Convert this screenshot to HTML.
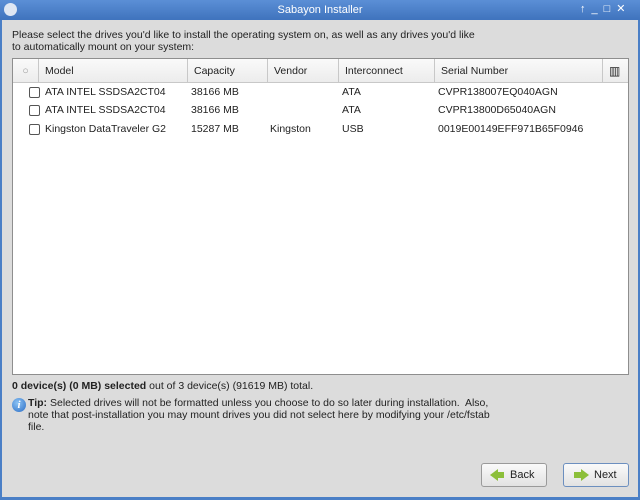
<html><head><style>
body{margin:0;width:640px;height:500px;background:#4a7fc6;font-family:"Liberation Sans",sans-serif;font-size:10.5px;color:#222;position:relative;overflow:hidden}
.title{position:absolute;left:0;top:0;width:640px;height:20px;background:linear-gradient(#5b8fd6,#3f73bd);color:#fff;text-align:center;line-height:20px;font-size:11px}
.win{position:absolute;left:2px;top:20px;width:636px;height:477px;background:#dcdcdc}
.abs{position:absolute;white-space:nowrap}
.tbl{position:absolute;left:12px;top:58px;width:615px;height:315px;background:#fff;border:1px solid #8e8e8e}
.hdr{position:absolute;left:0;top:0;width:615px;height:23px;background:linear-gradient(#fafafa,#ececec);border-bottom:1px solid #c8c8c8}
.hc{position:absolute;top:0;height:23px;line-height:25px;border-right:1px solid #c8c8c8;padding-left:6px;box-sizing:border-box}
.row{position:absolute;left:0;height:18px;line-height:18px;width:615px}
.row span{position:absolute}
.cb{position:absolute;left:16px;top:4px;width:9px;height:9px;border:1px solid #555;border-radius:2px;background:#fff}
.btn{position:absolute;top:463px;width:64px;height:22px;border:1px solid #9a9a9a;border-radius:3px;background:linear-gradient(#fafafa,#e2e2e2);line-height:22px;font-size:11px}
</style></head><body>
<div class="title">Sabayon Installer</div>
<div class="abs" style="left:4px;top:3px;width:13px;height:13px;border-radius:50%;background:#dfe7f3"></div>
<div class="abs" style="left:580px;top:2px;color:#fff;font-size:11px;letter-spacing:6px">↑_□✕</div>
<div class="win"></div>
<div class="abs" style="left:12px;top:29px;line-height:12px">Please select the drives you'd like to install the operating system on, as well as any drives you'd like<br>to automatically mount on your system:</div>
<div class="tbl">
<div class="hdr">
<div class="hc" style="left:0;width:26px;color:#999;text-align:center;padding:0">○</div>
<div class="hc" style="left:26px;width:149px">Model</div>
<div class="hc" style="left:175px;width:80px">Capacity</div>
<div class="hc" style="left:255px;width:71px">Vendor</div>
<div class="hc" style="left:326px;width:96px">Interconnect</div>
<div class="hc" style="left:422px;width:168px">Serial Number</div>
<div class="hc" style="left:590px;width:25px;border:none;font-size:12px">▥</div>
</div>
<div class="row" style="top:24px"><div class="cb"></div><span style="left:32px">ATA INTEL SSDSA2CT04</span><span style="left:178px">38166 MB</span><span style="left:329px">ATA</span><span style="left:425px">CVPR138007EQ040AGN</span></div>
<div class="row" style="top:42px"><div class="cb"></div><span style="left:32px">ATA INTEL SSDSA2CT04</span><span style="left:178px">38166 MB</span><span style="left:329px">ATA</span><span style="left:425px">CVPR13800D65040AGN</span></div>
<div class="row" style="top:61px"><div class="cb"></div><span style="left:32px">Kingston DataTraveler G2</span><span style="left:178px">15287 MB</span><span style="left:257px">Kingston</span><span style="left:329px">USB</span><span style="left:425px">0019E00149EFF971B65F0946</span></div>
</div>
<div class="abs" style="left:12px;top:380px"><b>0 device(s) (0 MB) selected</b> out of 3 device(s) (91619 MB) total.</div>
<div class="abs" style="left:12px;top:398px;width:14px;height:14px;border-radius:50%;background:radial-gradient(circle at 40% 35%,#8cc4f5,#2a6cc4);color:#fff;font:italic bold 11px 'Liberation Serif',serif;text-align:center;line-height:14px">i</div>
<div class="abs" style="left:28px;top:397px;line-height:12px"><b>Tip:</b> Selected drives will not be formatted unless you choose to do so later during installation.&nbsp; Also,<br>note that post-installation you may mount drives you did not select here by modifying your /etc/fstab<br>file.</div>
<div class="btn" style="left:481px"><span style="position:absolute;left:8px;top:5px;width:0;height:0;border-top:6px solid transparent;border-bottom:6px solid transparent;border-right:8px solid #8cbf3a"></span><span style="position:absolute;left:15px;top:8px;width:7px;height:6px;background:#8cbf3a"></span><span style="position:absolute;left:28px">Back</span></div>
<div class="btn" style="left:563px;border-color:#6c8fbf"><span style="position:absolute;left:10px;top:8px;width:7px;height:6px;background:#8cbf3a"></span><span style="position:absolute;left:17px;top:5px;width:0;height:0;border-top:6px solid transparent;border-bottom:6px solid transparent;border-left:8px solid #8cbf3a"></span><span style="position:absolute;left:30px">Next</span></div>
</body></html>
